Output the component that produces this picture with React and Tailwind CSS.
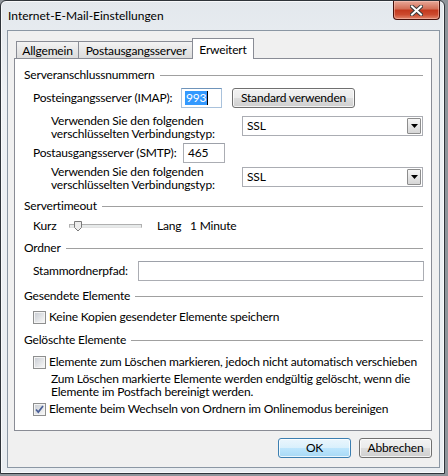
import React from 'react';

// Windows 7 style mail account dialog, "Erweitert" tab

function SectionHeader({ children, className = '' }) {
  return (
    <div className={`flex h-[16px] items-center ${className}`}>
      <span className="leading-[16px]">{children}</span>
      <div className="ml-[5px] h-px flex-1 bg-[#a0a0a0]" />
    </div>
  );
}

function TextBox({ className = '', focused = false, children }) {
  const edge = focused
    ? 'border-[#a9c2dc] border-t-[#6f94ba]'
    : 'border-[#abadb3] border-t-[#9da1a9]';
  return (
    <div className={`flex h-[20px] items-center border bg-white pl-[3px] ${edge} ${className}`}>
      {children}
    </div>
  );
}

function ComboBox({ value }) {
  return (
    <div className="flex h-[20px] w-[181px] items-center justify-between border border-[#abadb3] bg-white pl-[4px] pr-[1px]">
      <span>{value}</span>
      <div className="flex h-[16px] w-[14px] items-center justify-center rounded-[1px] border border-[#8d8d8d] bg-gradient-to-b from-[#f6f6f6] to-[#d6d6d6]">
        <svg width="7" height="4" viewBox="0 0 7 4">
          <path d="M0 0h7L3.5 4z" fill="#000" />
        </svg>
      </div>
    </div>
  );
}

function Button({ children, className = '', primary = false }) {
  const skin = primary
    ? 'border-[#3c7fb1] bg-[linear-gradient(#eaf6fd,#d9f0fc_50%,#bee6fd_50%,#a7d9f5)]'
    : 'border-[#707070] bg-[linear-gradient(#f2f2f2,#ebebeb_50%,#dddddd_50%,#cfcfcf)]';
  return (
    <div
      className={`flex h-[20px] items-center justify-center rounded-[3px] border shadow-[inset_0_0_0_1px_rgba(255,255,255,0.75)] ${skin} ${className}`}
    >
      {children}
    </div>
  );
}

function CheckBox({ checked = false }) {
  return (
    <div className="relative flex h-[13px] w-[13px] shrink-0 items-center justify-center border border-[#8e8f8f] bg-[#f4f4f4]">
      <div className="h-[9px] w-[9px] bg-gradient-to-br from-[#cbcfd5] to-[#f6f6f6]" />
      {checked && (
        <svg className="absolute left-0 top-0" width="11" height="11" viewBox="0 0 11 11">
          <path d="M2 5.5l2.3 2.6L9 2" fill="none" stroke="#4a5f97" strokeWidth="1.7" />
        </svg>
      )}
    </div>
  );
}

function CheckRow({ checked, label, className = '' }) {
  return (
    <div className={`flex h-[16px] items-center pl-[9px] ${className}`}>
      <CheckBox checked={checked} />
      <span className="ml-[3px] whitespace-nowrap">{label}</span>
    </div>
  );
}

function TwoLines({ first, second }) {
  return (
    <div className="flex w-[191px] flex-col whitespace-nowrap">
      <span className="h-[13px] leading-[13px]">{first}</span>
      <span className="h-[13px] leading-[13px]">{second}</span>
    </div>
  );
}

function CloseButton() {
  return (
    <div className="flex h-[19px] w-[47px] items-center justify-center rounded-b-[4px] border border-t-0 border-[#46100a] bg-[linear-gradient(#e8a898,#d26d55_45%,#c3381d_50%,#cc4a2e_75%,#e2866c)] shadow-[inset_0_0_0_1px_rgba(255,210,200,0.45)]">
      <svg width="13" height="11" viewBox="0 0 13 11">
        <path d="M2 1.5l9 8M11 1.5l-9 8" stroke="#3a3a3a" strokeWidth="4" strokeLinecap="square" />
        <path d="M2 1.5l9 8M11 1.5l-9 8" stroke="#ffffff" strokeWidth="2" strokeLinecap="square" />
      </svg>
    </div>
  );
}

function Tabs() {
  return (
    <div className="flex h-[20px] items-end pl-[2px]">
      <div className="flex h-[17px] w-[63px] items-center justify-center border border-b-0 border-[#898c95] bg-gradient-to-b from-[#f3f3f3] to-[#dcdcdc] pt-[2px]">
        Allgemein
      </div>
      <div className="-ml-px flex h-[17px] w-[116px] items-center justify-center border border-b-0 border-[#898c95] bg-gradient-to-b from-[#f3f3f3] to-[#dcdcdc] pt-[2px]">
        Postausgangsserver
      </div>
      <div className="relative z-10 -mb-px -ml-[2px] flex h-[21px] w-[62px] items-start justify-center border border-b-0 border-[#898c95] bg-white pt-[2px]">
        Erweitert
      </div>
    </div>
  );
}

function Slider() {
  return (
    <div className="relative flex h-[16px] w-[74px] items-center">
      <div className="h-[4px] w-[73px] border border-[#b0b0b0] border-b-[#e3e3e3] bg-[#e7eaea]" />
      <svg className="absolute left-[5px] top-[3px]" width="8" height="11" viewBox="0 0 8 11">
        <path d="M0.5 0.5h7v6l-3.5 3.5l-3.5-3.5z" fill="#ececec" stroke="#7a7a7a" />
      </svg>
    </div>
  );
}

export default function App() {
  return (
    <div className="flex h-[476px] w-[448px] bg-[#8f959b] font-['Lato',sans-serif] text-[12px] tracking-[-0.18px] text-black">
      <div className="flex h-[474px] w-[445px] flex-col rounded-t-[6px] border border-[#2f343a] bg-[linear-gradient(#e3e8ed,#eef1f4_20%,#e9edf1)] pb-[5px] pl-[6px] pr-[4px] shadow-[inset_0_0_0_1px_rgba(255,255,255,0.7)]">
        {/* caption */}
        <div className="flex h-[29px] items-start justify-between">
          <span className="pl-px pt-[7px] leading-[16px] tracking-normal">Internet-E-Mail-Einstellungen</span>
          <CloseButton />
        </div>

        {/* client area */}
        <div className="flex flex-1 flex-col border border-[#8b97a4] bg-[#f0f0f0] pl-[6px] pr-[7px] pt-[7px]">
          <Tabs />

          <div className="flex h-[373px] flex-col border border-[#898c95] bg-white pl-[9px] pr-[8px]">
            <SectionHeader className="mt-[8px]">Serveranschlussnummern</SectionHeader>

            <div className="mt-[5px] flex h-[20px] items-center pl-[9px]">
              <span className="w-[148px]">Posteingangsserver (IMAP):</span>
              <TextBox focused className="w-[41px]">
                <span className="flex items-center bg-[#3399ff] px-[1px] leading-[14px] text-white">993</span>
                <span className="h-[14px] w-px bg-black" />
              </TextBox>
              <Button className="ml-[10px] w-[123px]">Standard verwenden</Button>
            </div>

            <div className="mt-[6px] flex h-[26px] items-start pl-[27px]">
              <TwoLines first="Verwenden Sie den folgenden" second="verschlüsselten Verbindungstyp:" />
              <div className="mt-[2px]">
                <ComboBox value="SSL" />
              </div>
            </div>

            <div className="mt-[3px] flex h-[20px] items-center pl-[9px]">
              <span className="w-[150px]">Postausgangsserver (SMTP):</span>
              <TextBox className="w-[42px] pl-[4px]">465</TextBox>
            </div>

            <div className="mt-[2px] flex h-[26px] items-start pl-[27px]">
              <TwoLines first="Verwenden Sie den folgenden" second="verschlüsselten Verbindungstyp:" />
              <div className="mt-[2px]">
                <ComboBox value="SSL" />
              </div>
            </div>

            <SectionHeader className="mt-[7px]">Servertimeout</SectionHeader>
            <div className="mt-[4px] flex h-[16px] items-center pl-[9px]">
              <span className="w-[36px]">Kurz</span>
              <Slider />
              <span className="ml-[14px] w-[33px]">Lang</span>
              <span>1 Minute</span>
            </div>

            <SectionHeader className="mt-[6px]">Ordner</SectionHeader>
            <div className="mt-[5px] flex h-[20px] items-center pl-[9px]">
              <span className="w-[105px]">Stammordnerpfad:</span>
              <TextBox className="-mr-px flex-1" />
            </div>

            <SectionHeader className="mt-[7px]">Gesendete Elemente</SectionHeader>
            <CheckRow className="mt-[5px]" label="Keine Kopien gesendeter Elemente speichern" />

            <SectionHeader className="mt-[7px]">Gelöschte Elemente</SectionHeader>
            <CheckRow className="mt-[6px]" label="Elemente zum Löschen markieren, jedoch nicht automatisch verschieben" />
            <div className="mt-[2px] flex flex-col whitespace-nowrap pl-[27px]">
              <span className="h-[13px] leading-[13px]">Zum Löschen markierte Elemente werden endgültig gelöscht, wenn die</span>
              <span className="h-[13px] leading-[13px]">Elemente im Postfach bereinigt werden.</span>
            </div>
            <CheckRow
              className="mt-[3px]"
              checked
              label="Elemente beim Wechseln von Ordnern im Onlinemodus bereinigen"
            />
          </div>

          <div className="mt-[7px] flex justify-end gap-[8px]">
            <Button primary className="w-[73px]">OK</Button>
            <Button className="w-[73px]">Abbrechen</Button>
          </div>
        </div>
      </div>
    </div>
  );
}
